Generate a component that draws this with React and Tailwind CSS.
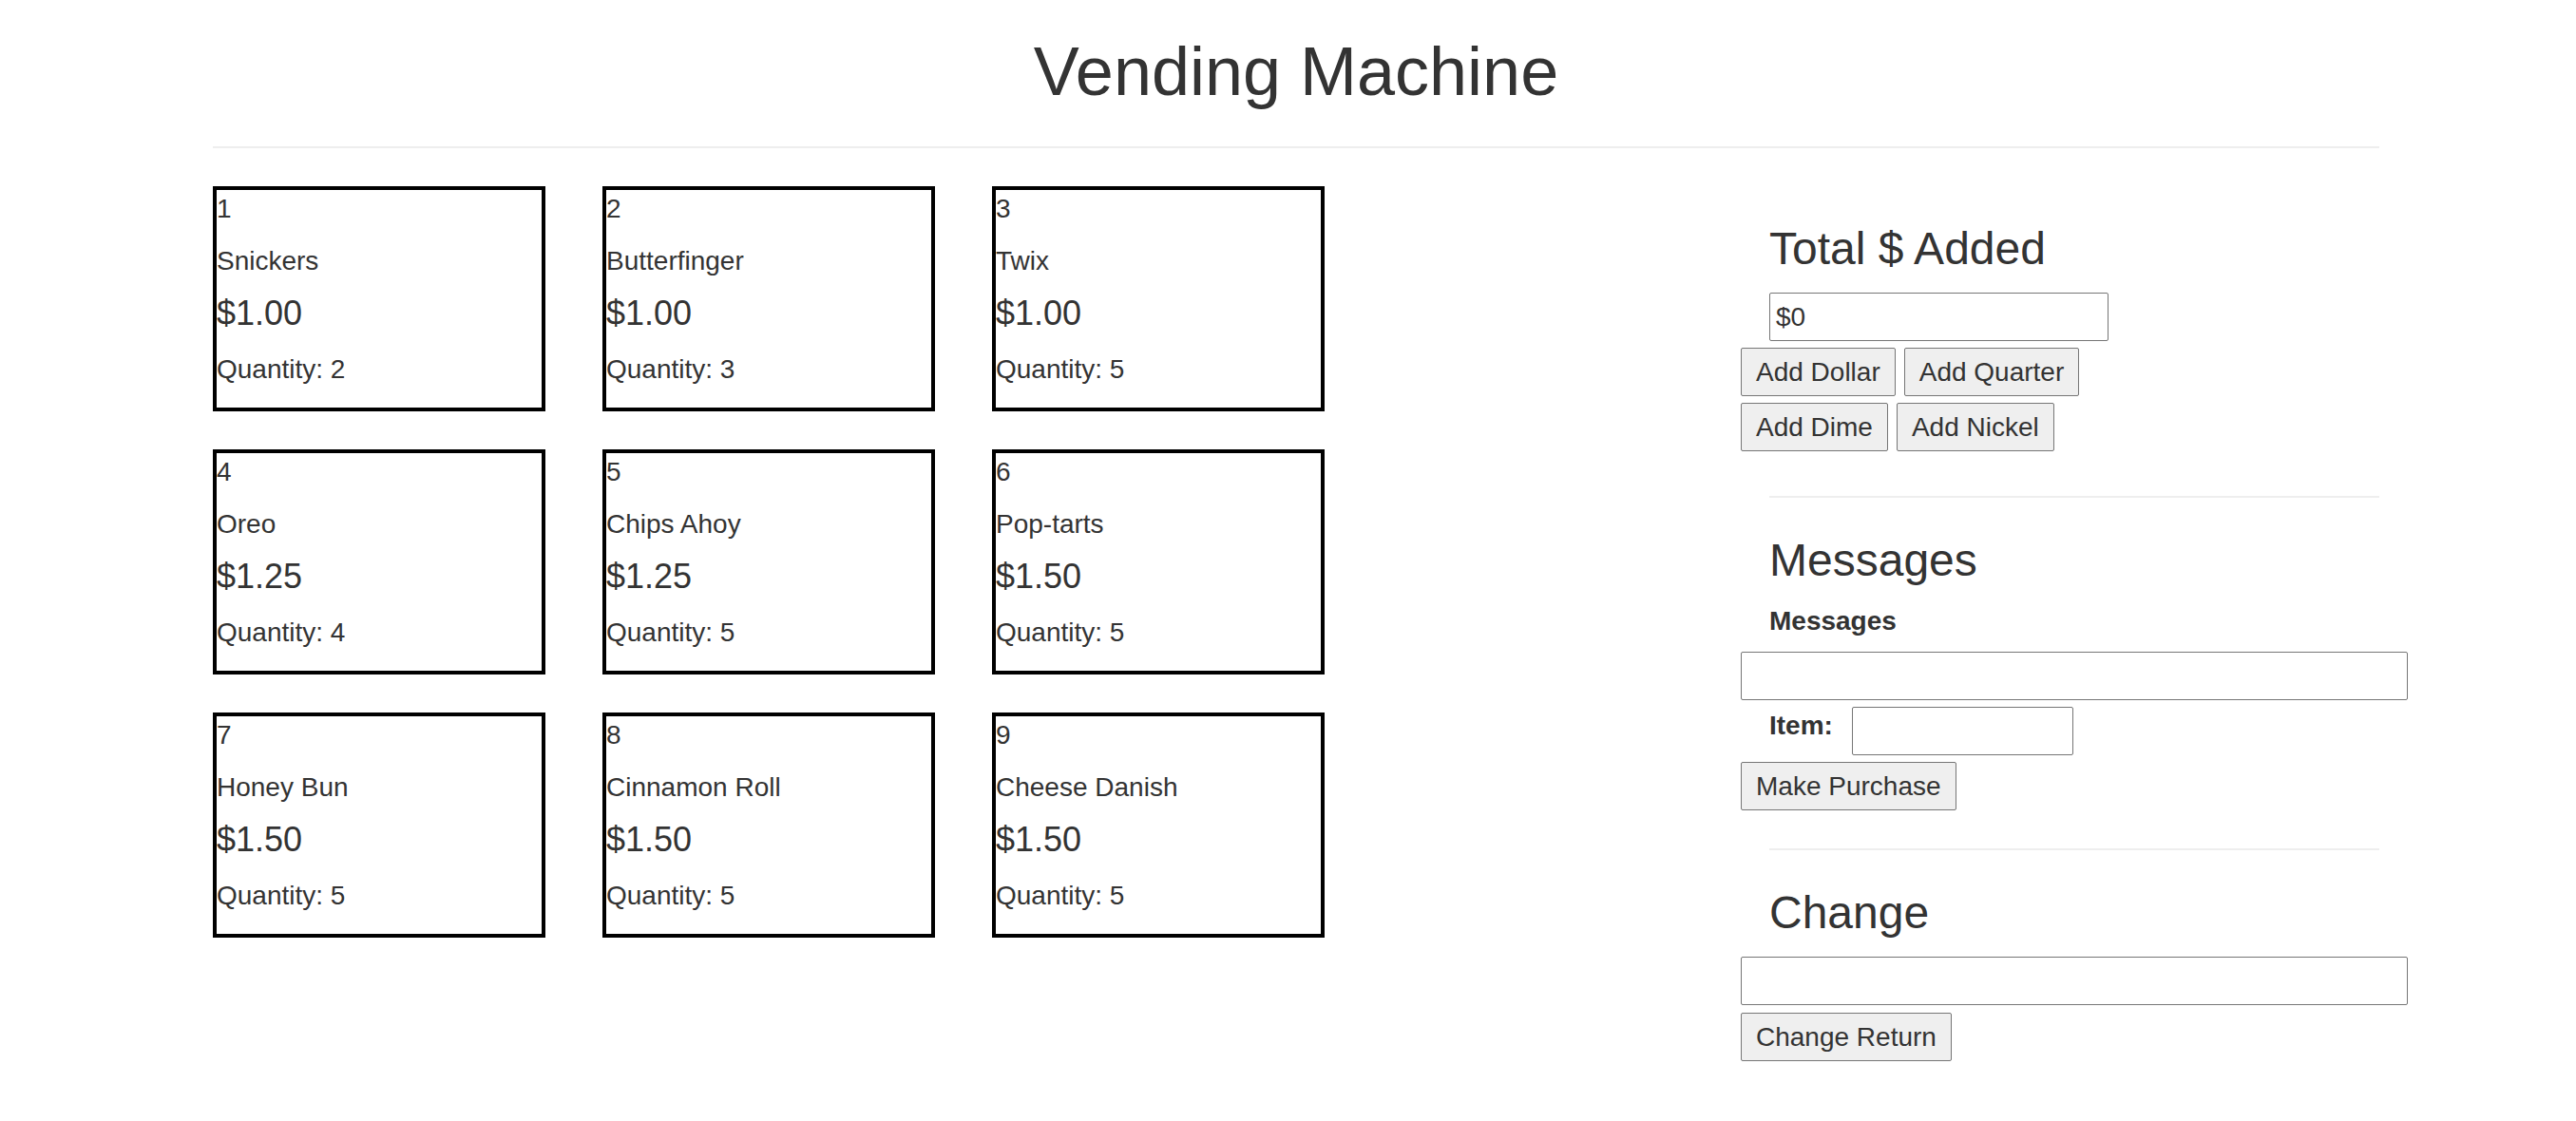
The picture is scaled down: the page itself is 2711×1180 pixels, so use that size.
import { useState } from 'react';

const items = [
  { id: 1, name: 'Snickers', price: '$1.00', qty: 2 },
  { id: 2, name: 'Butterfinger', price: '$1.00', qty: 3 },
  { id: 3, name: 'Twix', price: '$1.00', qty: 5 },
  { id: 4, name: 'Oreo', price: '$1.25', qty: 4 },
  { id: 5, name: 'Chips Ahoy', price: '$1.25', qty: 5 },
  { id: 6, name: 'Pop-tarts', price: '$1.50', qty: 5 },
  { id: 7, name: 'Honey Bun', price: '$1.50', qty: 5 },
  { id: 8, name: 'Cinnamon Roll', price: '$1.50', qty: 5 },
  { id: 9, name: 'Cheese Danish', price: '$1.50', qty: 5 },
];

function Btn({ children, onClick }) {
  return (
    <button
      onClick={onClick}
      className="h-[51px] px-[15px] border border-[#767676] rounded-[2px] bg-[#efefef] text-[28px] leading-[49px] text-[#333] whitespace-nowrap"
    >
      {children}
    </button>
  );
}

export default function App() {
  const [total, setTotal] = useState(0);
  const [item, setItem] = useState('');

  return (
    <div
      className="min-h-screen bg-white text-[#333] text-[28px] leading-[40px]"
      style={{ fontFamily: '"Liberation Sans", Arial, sans-serif' }}
    >
      <div className="ml-[224px] w-[2280px]">
        {/* header */}
        <h1 className="pt-[36px] text-center text-[72px] leading-[79px] font-normal">
          Vending Machine
        </h1>
        <hr className="mt-[39px] border-0 border-t-2 border-[#eeeeee]" />

        <div className="mt-[40px] flex w-[2310px]">
          {/* items */}
          <div className="w-[1608px] shrink-0">
            <div className="grid grid-cols-[repeat(3,350px)] gap-x-[60px] gap-y-[40px]">
              {items.map((it) => (
                <div
                  key={it.id}
                  onClick={() => setItem(String(it.id))}
                  className="w-[350px] h-[237px] border-4 border-black cursor-pointer"
                >
                  <div className="leading-[40px]">{it.id}</div>
                  <div className="mt-[15px] leading-[40px]">{it.name}</div>
                  <div className="mt-[15px] text-[36px] leading-[40px]">{it.price}</div>
                  <div className="mt-[19px] leading-[40px]">Quantity: {it.qty}</div>
                </div>
              ))}
            </div>
          </div>

          {/* controls */}
          <div className="w-[702px] shrink-0">
            <h3 className="mt-[39px] pl-[30px] text-[48px] leading-[53px] font-normal">
              Total $ Added
            </h3>
            <input
              readOnly
              value={'$' + total}
              className="block ml-[30px] mt-[20px] w-[357px] h-[51px] border border-[#767676] rounded-[2px] pl-[6px] text-[28px] text-[#333] outline-none"
            />
            <div className="mt-[7px] flex gap-x-[9px]">
              <Btn onClick={() => setTotal(+(total + 1).toFixed(2))}>Add Dollar</Btn>
              <Btn onClick={() => setTotal(+(total + 0.25).toFixed(2))}>Add Quarter</Btn>
            </div>
            <div className="mt-[7px] flex gap-x-[9px]">
              <Btn onClick={() => setTotal(+(total + 0.1).toFixed(2))}>Add Dime</Btn>
              <Btn onClick={() => setTotal(+(total + 0.05).toFixed(2))}>Add Nickel</Btn>
            </div>

            <hr className="mt-[47px] mx-[30px] border-0 border-t-2 border-[#eeeeee]" />

            <h3 className="mt-[39px] pl-[30px] text-[48px] leading-[53px] font-normal">
              Messages
            </h3>
            <div className="mt-[18px] pl-[30px] font-bold leading-[40px]">Messages</div>
            <input
              readOnly
              className="block mt-[12px] w-[702px] h-[51px] border border-[#767676] rounded-[2px] text-[28px] outline-none"
            />
            <div className="mt-[7px] flex items-start">
              <span className="pl-[30px] font-bold leading-[40px]">Item:</span>
              <input
                value={item}
                onChange={(e) => setItem(e.target.value)}
                className="ml-[20px] w-[233px] h-[51px] border border-[#767676] rounded-[2px] pl-[6px] text-[28px] outline-none"
              />
            </div>
            <div className="mt-[7px] flex">
              <Btn>Make Purchase</Btn>
            </div>

            <hr className="mt-[40px] mx-[30px] border-0 border-t-2 border-[#eeeeee]" />

            <h3 className="mt-[39px] pl-[30px] text-[48px] leading-[53px] font-normal">
              Change
            </h3>
            <input
              readOnly
              className="block mt-[20px] w-[702px] h-[51px] border border-[#767676] rounded-[2px] text-[28px] outline-none"
            />
            <div className="mt-[8px] flex">
              <Btn onClick={() => setTotal(0)}>Change Return</Btn>
            </div>
          </div>
        </div>
      </div>
    </div>
  );
}
